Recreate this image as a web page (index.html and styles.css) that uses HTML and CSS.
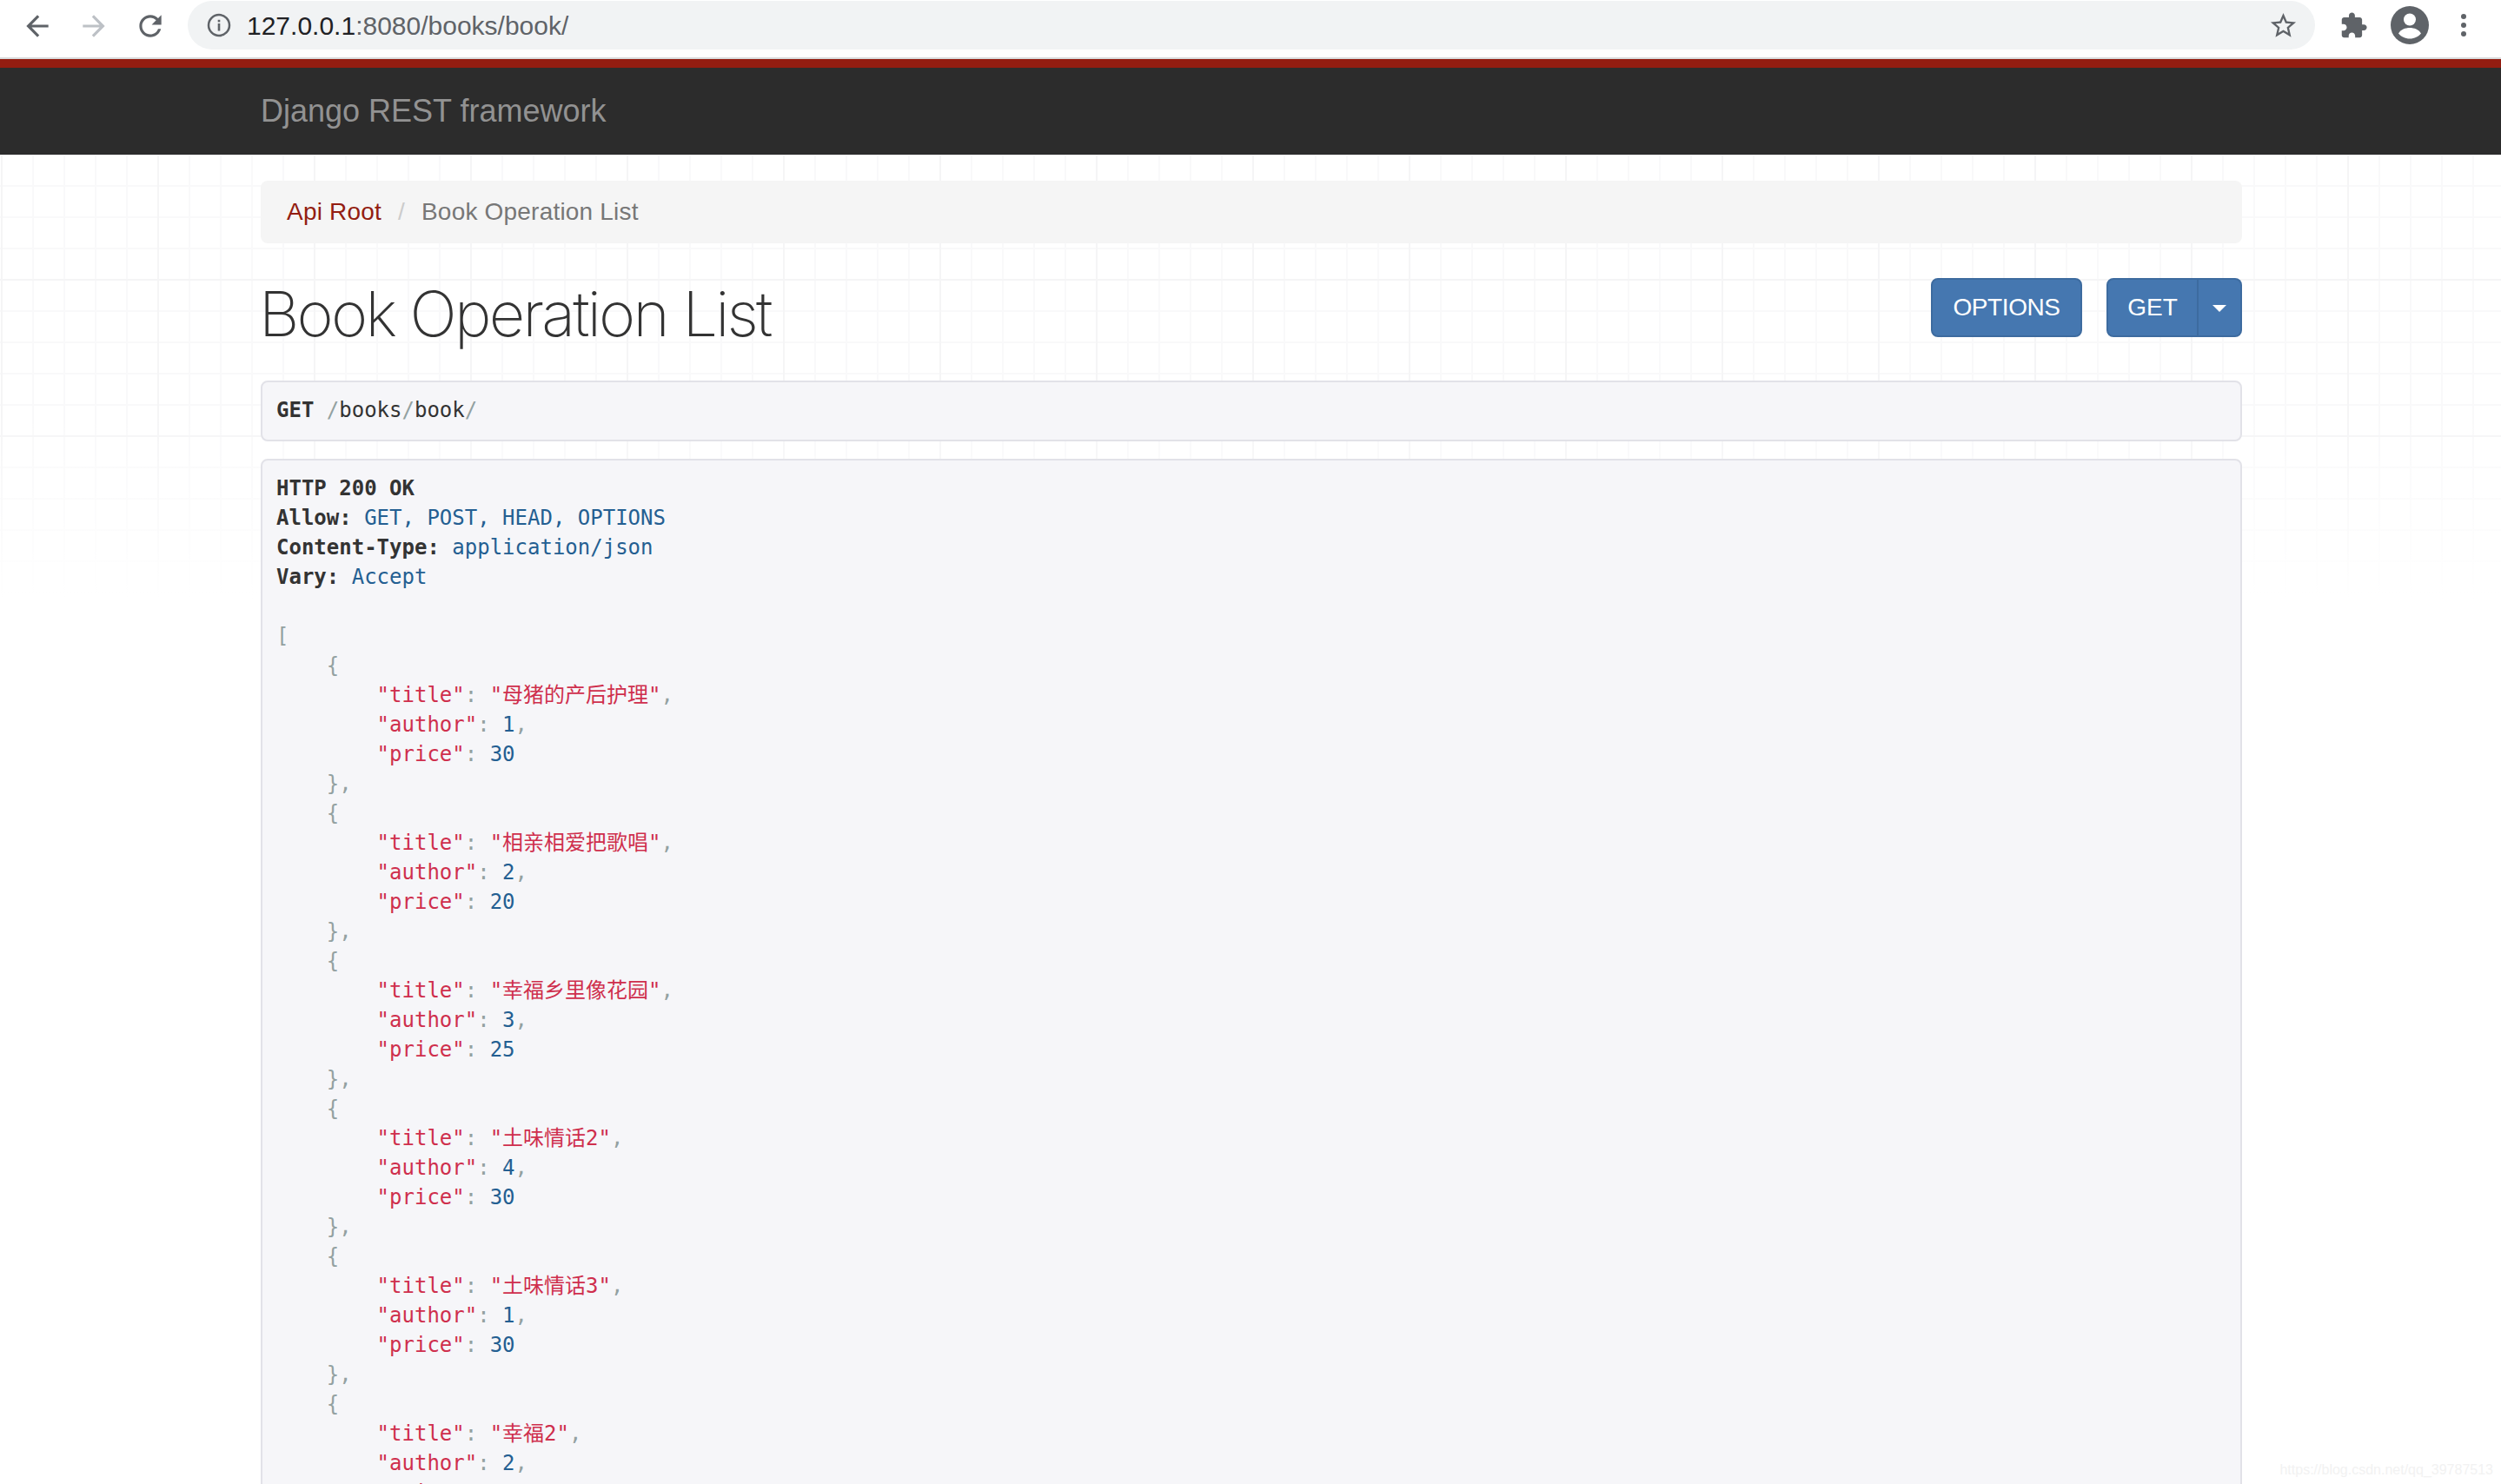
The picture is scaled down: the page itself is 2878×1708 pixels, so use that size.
FILE: index.html
```html
<!DOCTYPE html>
<html lang="en">
<head>
<meta charset="utf-8">
<title>Book Operation List – Django REST framework</title>
<link rel="stylesheet" href="styles.css">
</head>
<body>
<header class="chrome">
  <div class="nav-icons">
    <svg class="ic-nav" viewBox="0 0 24 24"><path class="dark" d="M20 11H7.830l5.590-5.590L12 4l-8 8 8 8 1.410-1.410L7.830 13H20v-2z"/></svg>
    <svg class="ic-nav" viewBox="0 0 24 24"><path class="muted" d="M12 4l-1.410 1.410L16.170 11H4v2h12.170l-5.580 5.590L12 20l8-8z"/></svg>
    <svg class="ic-nav" viewBox="0 0 24 24"><path class="dark" d="M17.65 6.35C16.2 4.9 14.21 4 12 4c-4.42 0-7.99 3.58-7.99 8s3.57 8 7.99 8c3.73 0 6.84-2.55 7.73-6h-2.08c-.82 2.33-3.04 4-5.65 4-3.31 0-6-2.69-6-6s2.69-6 6-6c1.66 0 3.14.69 4.22 1.78L13 11h7V4l-2.35 2.35z"/></svg>
  </div>
  <div class="omnibox">
    <svg class="ic-info" viewBox="0 0 28 28"><circle cx="14" cy="14" r="12" class="ring"/><rect x="12.7" y="12" width="2.6" height="8.5" class="dark"/><rect x="12.7" y="7.8" width="2.6" height="2.6" class="dark"/></svg>
    <span class="url"><span class="host">127.0.0.1</span>:8080/books/book/</span>
    <svg class="ic-star" viewBox="0 0 24 24"><path class="dark" d="M22 9.24l-7.19-.62L12 2 9.19 8.63 2 9.24l5.46 4.73L5.82 21 12 17.27 18.18 21l-1.63-7.03L22 9.24zM12 15.4l-3.76 2.27 1-4.28-3.32-2.88 4.38-.38L12 6.1l1.71 4.04 4.38.38-3.32 2.88 1 4.28L12 15.4z"/></svg>
  </div>
  <svg class="ic-ext" viewBox="0 0 24 24"><path class="dark" d="M20.5 11H19V7c0-1.1-.9-2-2-2h-4V3.5C13 2.12 11.88 1 10.5 1S8 2.12 8 3.5V5H4c-1.1 0-1.99.9-1.99 2v3.8H3.5c1.49 0 2.7 1.21 2.7 2.7s-1.21 2.7-2.7 2.7H2V20c0 1.1.9 2 2 2h3.8v-1.5c0-1.49 1.21-2.7 2.7-2.7 1.49 0 2.7 1.21 2.7 2.7V22H17c1.1 0 2-.9 2-2v-4h1.5c1.38 0 2.5-1.12 2.5-2.5S21.88 11 20.5 11z"/></svg>
  <svg class="ic-account" viewBox="0 0 44 44"><circle cx="22" cy="22" r="22" class="dark"/><circle cx="22" cy="15.5" r="7" fill="#fff"/><path fill="#fff" d="M9 31.5c2.5-4.5 8-6.5 13-6.5s10.500 2 13 6.500C32 35 27.500 37.500 22 37.500S12 35 9 31.500z"/></svg>
  <svg class="ic-menu" viewBox="0 0 6 26"><circle cx="3" cy="3" r="3" class="dark"/><circle cx="3" cy="13" r="3" class="dark"/><circle cx="3" cy="23" r="3" class="dark"/></svg>
</header>

<nav class="navbar">
  <div class="container"><a class="brand">Django REST framework</a></div>
</nav>

<main class="container content">
  <ul class="breadcrumb">
    <li class="crumb-link">Api Root</li>
    <li class="crumb-sep">/</li>
    <li class="crumb-active">Book Operation List</li>
  </ul>

  <div class="page-head">
    <h1>Book Operation List</h1>
    <div class="actions">
      <button class="btn btn-options">OPTIONS</button>
      <div class="btn-group">
        <button class="btn btn-left">GET</button>
        <button class="btn btn-caret"><span class="caret"></span></button>
      </div>
    </div>
  </div>

  <pre class="request"><b>GET</b> <span class="pun">/</span>books<span class="pun">/</span>book<span class="pun">/</span></pre>

  <pre class="response"><span class="hdr">HTTP 200 OK</span>
<span class="hdr">Allow:</span> <span class="lit">GET, POST, HEAD, OPTIONS</span>
<span class="hdr">Content-Type:</span> <span class="lit">application/json</span>
<span class="hdr">Vary:</span> <span class="lit">Accept</span>

<span class="pun">[</span>
    <span class="pun">{</span>
        <span class="str">"title"</span><span class="pun">:</span> <span class="str">"母猪的产后护理"</span><span class="pun">,</span>
        <span class="str">"author"</span><span class="pun">:</span> <span class="lit">1</span><span class="pun">,</span>
        <span class="str">"price"</span><span class="pun">:</span> <span class="lit">30</span>
    <span class="pun">},</span>
    <span class="pun">{</span>
        <span class="str">"title"</span><span class="pun">:</span> <span class="str">"相亲相爱把歌唱"</span><span class="pun">,</span>
        <span class="str">"author"</span><span class="pun">:</span> <span class="lit">2</span><span class="pun">,</span>
        <span class="str">"price"</span><span class="pun">:</span> <span class="lit">20</span>
    <span class="pun">},</span>
    <span class="pun">{</span>
        <span class="str">"title"</span><span class="pun">:</span> <span class="str">"幸福乡里像花园"</span><span class="pun">,</span>
        <span class="str">"author"</span><span class="pun">:</span> <span class="lit">3</span><span class="pun">,</span>
        <span class="str">"price"</span><span class="pun">:</span> <span class="lit">25</span>
    <span class="pun">},</span>
    <span class="pun">{</span>
        <span class="str">"title"</span><span class="pun">:</span> <span class="str">"土味情话2"</span><span class="pun">,</span>
        <span class="str">"author"</span><span class="pun">:</span> <span class="lit">4</span><span class="pun">,</span>
        <span class="str">"price"</span><span class="pun">:</span> <span class="lit">30</span>
    <span class="pun">},</span>
    <span class="pun">{</span>
        <span class="str">"title"</span><span class="pun">:</span> <span class="str">"土味情话3"</span><span class="pun">,</span>
        <span class="str">"author"</span><span class="pun">:</span> <span class="lit">1</span><span class="pun">,</span>
        <span class="str">"price"</span><span class="pun">:</span> <span class="lit">30</span>
    <span class="pun">},</span>
    <span class="pun">{</span>
        <span class="str">"title"</span><span class="pun">:</span> <span class="str">"幸福2"</span><span class="pun">,</span>
        <span class="str">"author"</span><span class="pun">:</span> <span class="lit">2</span><span class="pun">,</span>
        <span class="str">"price"</span><span class="pun">:</span> <span class="lit">30</span></pre>
</main>
<div class="watermark">https://blog.csdn.net/qq_39787513</div>
</body>
</html>
```

FILE: styles.css
```css
html, body { margin: 0; padding: 0; height: 1708px; overflow: hidden; }
body {
  position: relative;
  font-family: "Liberation Sans", Arial, sans-serif;
  font-size: 28px;
  color: #333;
  background-color: #fff;
  background-image:
    linear-gradient(to bottom, rgba(255,255,255,0) 470px, #fff 690px),
    linear-gradient(to right, #f5f5f6 2px, transparent 2px),
    linear-gradient(to bottom, #f5f5f6 2px, transparent 2px),
    linear-gradient(to right, #f9f9fa 2px, transparent 2px),
    linear-gradient(to bottom, #f9f9fa 2px, transparent 2px);
  background-size: 100% 100%, 180px 100%, 100% 180px, 36px 100%, 100% 36px;
  background-position: 0 0, 1px 0, 0 141px, 1px 0, 0 141px;
}

.chrome {
  display: flex;
  align-items: center;
  height: 66px;
  background: #fff;
  border-bottom: 2px solid #d9dadc;
}
.nav-icons { display: flex; gap: 27px; margin: -6px 24px 0 24px; flex: none; }
.ic-nav { width: 38px; height: 38px; display: block; }
.dark { fill: #5f6368; }
.muted { fill: #bdc1c6; }
.ring { fill: none; stroke: #5f6368; stroke-width: 2.5; }
.omnibox {
  display: flex;
  align-items: center;
  flex: none;
  width: 2448px;
  height: 56px;
  margin-top: -8px;
  background: #f1f3f4;
  border-radius: 28px;
}
.ic-info { width: 28px; height: 28px; margin-left: 22px; flex: none; }
.url { margin-left: 18px; padding-top: 2px; font-size: 30px; color: #5f6368; }
.host { color: #202124; }
.ic-star { width: 35px; height: 35px; margin-left: auto; margin-right: 19px; flex: none; }
.ic-ext { width: 33px; height: 33px; margin: -8px 0 0 28px; flex: none; }
.ic-account { width: 44px; height: 44px; margin: -8px 0 0 26px; flex: none; }
.ic-menu { width: 6px; height: 26px; margin: -8px 0 0 37px; flex: none; }

.navbar {
  background: #2c2c2c;
  border-top: 10px solid #931d11;
  height: 100px;
}
.container { width: 2280px; margin-left: 300px; }
.brand { display: block; font-size: 36px; line-height: 100px; color: #929292; }

.content { padding-top: 30px; }
.breadcrumb {
  display: flex;
  list-style: none;
  margin: 0;
  height: 72px;
  padding: 0 30px;
  align-items: center;
  background: #f5f5f5;
  border-radius: 8px;
  letter-spacing: 0.2px;
}
.crumb-link { color: #931d11; }
.crumb-sep { color: #ccc; margin: 0 19px; }
.crumb-active { color: #777; }

.page-head {
  display: flex;
  justify-content: space-between;
  align-items: flex-start;
  height: 158px;
}
h1 {
  margin: 37px 0 0 -2px;
  font-family: Inter, "Liberation Sans", sans-serif;
  font-weight: 200;
  font-size: 72px;
  line-height: 88px;
  letter-spacing: -2.8px;
  color: #333;
}
.actions { display: flex; gap: 28px; margin-top: 40px; }
.btn-group { display: flex; }
.btn {
  height: 68px;
  padding: 0;
  background: #4577b0;
  border: 2px solid #3d6b9f;
  border-radius: 8px;
  color: #fff;
  font-family: "Liberation Sans", Arial, sans-serif;
  font-size: 28px;
}
.btn-options { width: 174px; letter-spacing: -0.4px; }
.btn-left { border-radius: 8px 0 0 8px; width: 106px; }
.btn-caret { border-radius: 0 8px 8px 0; border-left: 0; width: 50px; }
.caret {
  display: block;
  margin: 2px auto 0;
  width: 0; height: 0;
  border-top: 8px solid #fff;
  border-left: 8px solid transparent;
  border-right: 8px solid transparent;
}

pre {
  margin: 0;
  background: #f6f6f9;
  border: 2px solid #e2e2e8;
  border-radius: 8px;
  padding: 15px 16px 17px;
  font-family: "DejaVu Sans Mono", "Noto Sans CJK SC", monospace;
  font-size: 24px;
  line-height: 34px;
  color: #333;
}
.request { margin-bottom: 20px; }
.request b, .hdr { font-weight: 700; color: #333; }
.response { height: 1400px; border-radius: 8px 8px 0 0; }
.pun { color: #93a1a1; }
.lit { color: #245f92; }
.str { color: #cf2f4d; }

.watermark {
  position: absolute;
  right: 9px;
  bottom: 7px;
  font-size: 16px;
  color: #f2f2f2;
}
```
